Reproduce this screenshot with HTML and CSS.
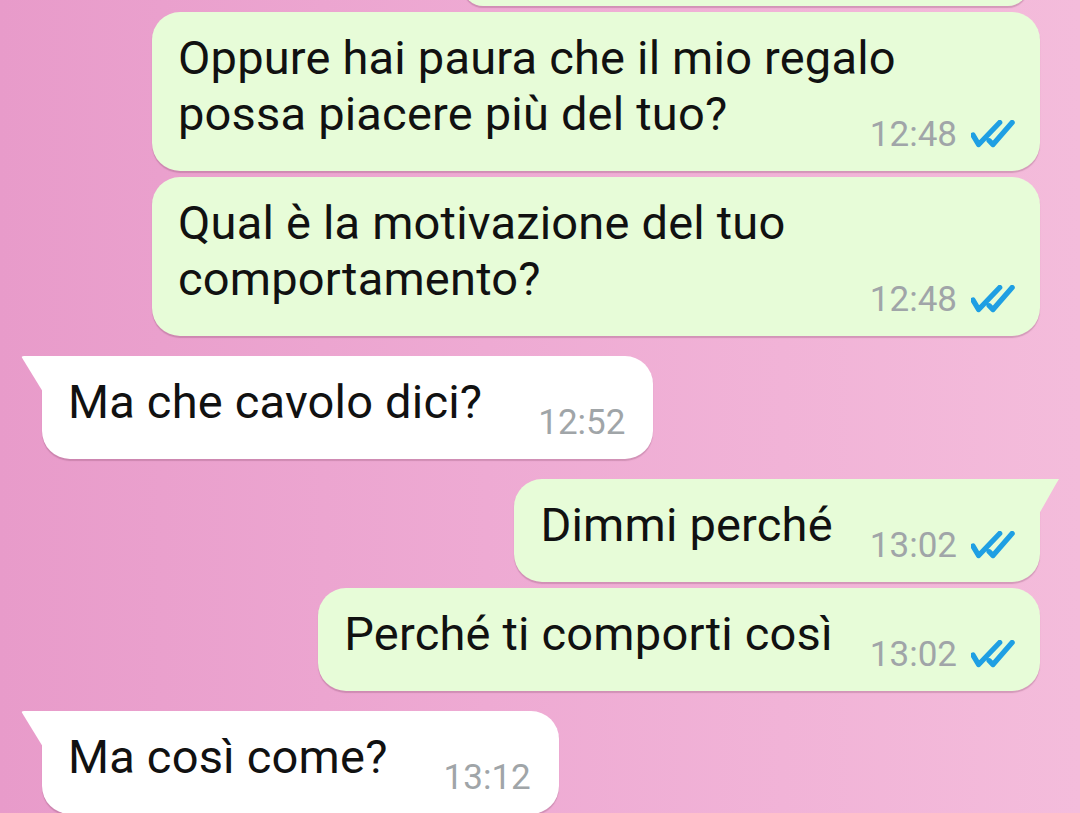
FILE: index.html
```html
<!DOCTYPE html>
<html lang="it">
<head>
    <meta charset="UTF-8">
    <meta name="viewport" content="width=device-width, initial-scale=1.0">
    <title>Chat</title>
    <link rel="stylesheet" href="styles.css">
</head>
<body>
    <div class="chat">
        <div class="bubble out stub"></div>

        <div class="bubble out">Oppure hai paura che il mio regalo possa piacere più del tuo?<span class="meta"><span class="time">12:48</span><svg class="ticks" viewBox="0 0 46 28"><path d="M2 15 L8 25 L30 2 M19 21 L23 25 L43 2"/></svg></span></div>

        <div class="bubble out">Qual è la motivazione del tuo comportamento?<span class="meta"><span class="time">12:48</span><svg class="ticks" viewBox="0 0 46 28"><path d="M2 15 L8 25 L30 2 M19 21 L23 25 L43 2"/></svg></span></div>

        <div class="bubble in first">Ma che cavolo dici?<span class="meta"><span class="time">12:52</span></span></div>

        <div class="bubble out first">Dimmi perché<span class="meta"><span class="time">13:02</span><svg class="ticks" viewBox="0 0 46 28"><path d="M2 15 L8 25 L30 2 M19 21 L23 25 L43 2"/></svg></span></div>

        <div class="bubble out">Perché ti comporti così<span class="meta"><span class="time">13:02</span><svg class="ticks" viewBox="0 0 46 28"><path d="M2 15 L8 25 L30 2 M19 21 L23 25 L43 2"/></svg></span></div>

        <div class="bubble in first">Ma così come?<span class="meta"><span class="time">13:12</span></span></div>
    </div>
</body>
</html>
```

FILE: styles.css
```css
body {
    margin: 0;
    height: 813px;
    overflow: hidden;
    font-family: Roboto, "Noto Sans", sans-serif;
    background: linear-gradient(to right, #e89bca 0%, #eeaad3 45%, #f4bcdb 100%);
}
.chat {
    display: flex;
    flex-direction: column;
    padding: 0 40px 0 42px;
}
.bubble {
    position: relative;
    max-width: 888px;
    box-sizing: border-box;
    padding: 18px 25px 16px 26px;
    margin-top: 6px;
    border-radius: 28px;
    font-size: 47px;
    letter-spacing: 0.2px;
    line-height: 56px;
    color: #111;
    box-shadow: 0 2px 1px rgba(120, 60, 90, 0.25);
}
.bubble.out {
    align-self: flex-end;
    background-color: #e7fcd8;
}
.bubble.in {
    align-self: flex-start;
    background-color: #ffffff;
    padding-right: 28px;
}
.bubble.first {
    margin-top: 20px;
}
.bubble.in.first {
    border-top-left-radius: 0;
}
.bubble.out.first {
    border-top-right-radius: 0;
}
.bubble.in.first::before,
.bubble.out.first::before {
    content: "";
    position: absolute;
    top: 0;
    width: 22px;
    height: 36px;
}
.bubble.in.first::before {
    left: -21px;
    background-color: #ffffff;
    clip-path: polygon(0 0, 100% 0, 100% 100%, 3px 5px);
    border-top-left-radius: 3px;
}
.bubble.out.first::before {
    right: -19px;
    width: 20px;
    height: 35px;
    background-color: #e7fcd8;
    clip-path: polygon(0 0, 100% 0, calc(100% - 3px) 5px, 0 100%);
}
.stub {
    width: 565px;
    height: 40px;
    margin-top: -34px;
    margin-right: 12px;
    padding: 0;
}
.meta {
    float: right;
    display: flex;
    align-items: center;
    margin: 29px 0 0 37px;
    line-height: 40px;
    letter-spacing: 0;
}
.bubble.in .meta {
    margin-left: 56px;
}
.time {
    font-size: 35px;
    color: #a0a5a8;
}
.ticks {
    width: 44px;
    height: 28px;
    margin-left: 14px;
    margin-top: -2px;
    fill: none;
    stroke: #1f9fe3;
    stroke-width: 5.5;
    stroke-linecap: round;
    stroke-linejoin: round;
}
```
